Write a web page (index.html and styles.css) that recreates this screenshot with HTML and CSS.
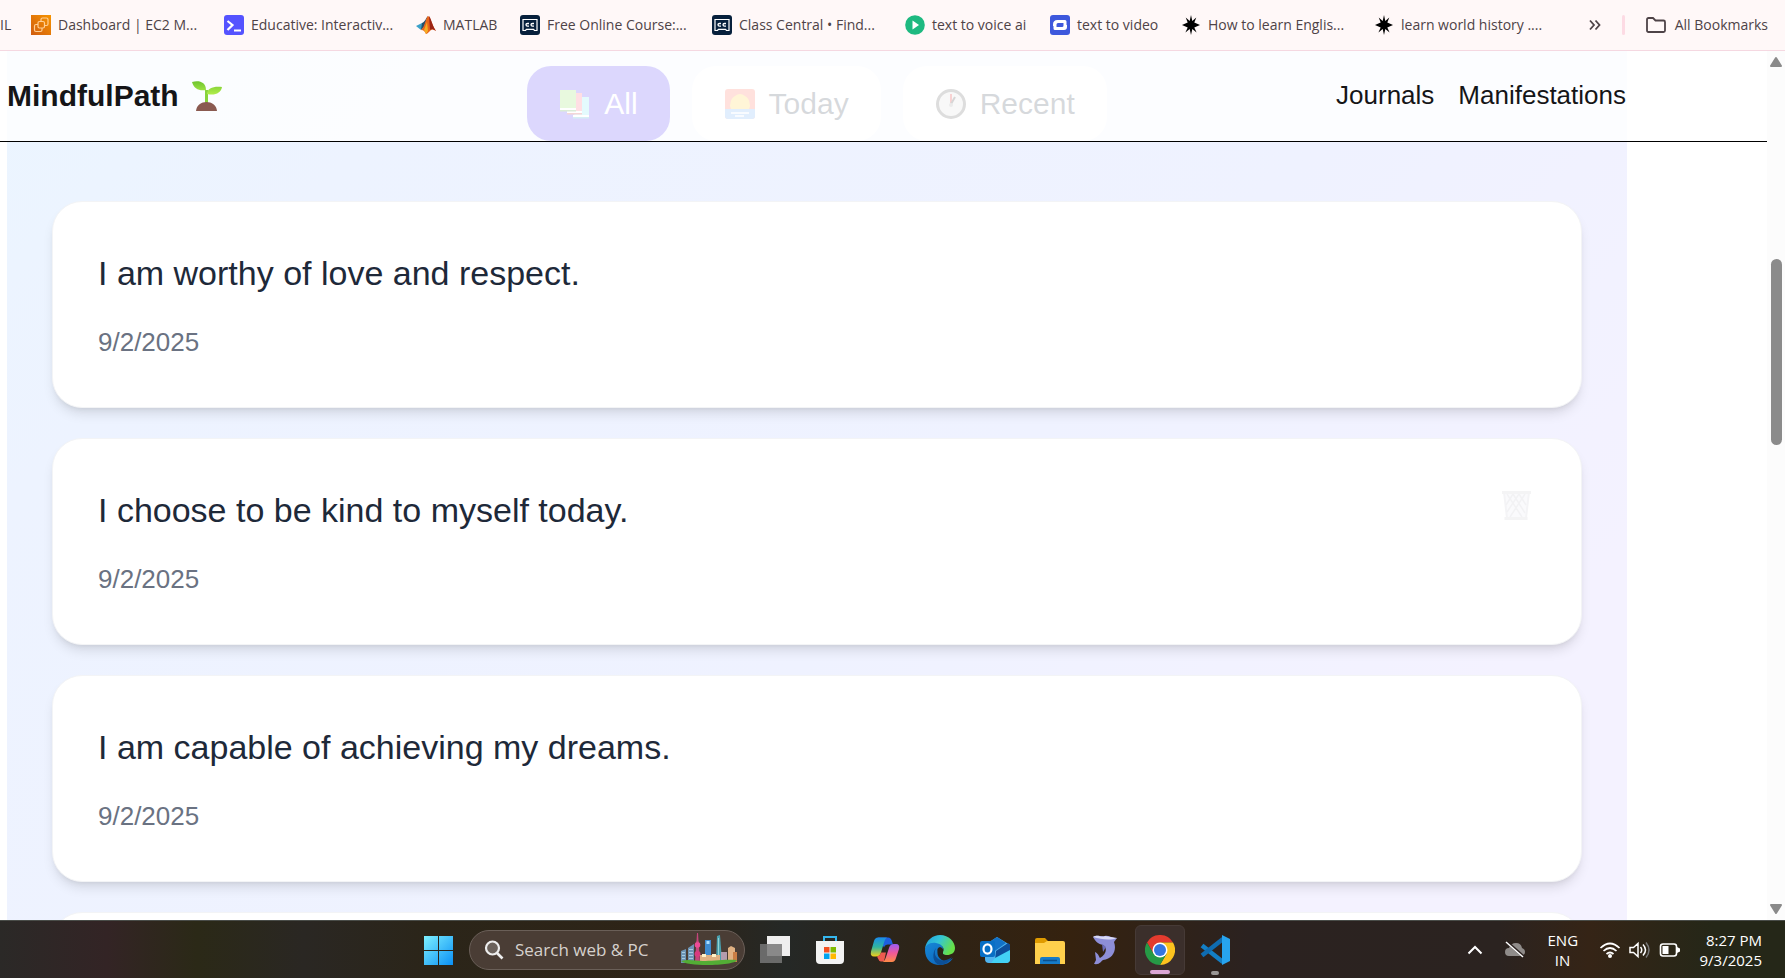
FILE: index.html
```html
<!DOCTYPE html>
<html lang="en">
<head>
<meta charset="utf-8">
<title>MindfulPath</title>
<link rel="stylesheet" href="styles.css">
</head>
<body>
<div class="screen">
  <nav class="bookmarks" aria-label="Bookmarks">
    <a class="bm" href="#">IL</a>
    <a class="bm" href="#"><svg class="ic20" viewBox="0 0 20 20"><defs><linearGradient id="aws" x1="0" y1="1" x2="1" y2="0"><stop offset="0" stop-color="#d05c10"/><stop offset="1" stop-color="#f79400"/></linearGradient></defs><path fill="url(#aws)" d="M0 0h20v20H0z"/><g fill="none" stroke="#ffcf95" stroke-width="1.200"><rect x="7" y="6.500" width="6.500" height="6.500" rx="1.500"/><path d="M10 6V4.500Q10 3 11.500 3H15.500Q17 3 17 4.500V9Q17 10.500 15.500 10.500H14M7 9.500H5Q3.500 9.500 3.500 11V15Q3.500 16.500 5 16.500H9.500Q11 16.500 11 15V13"/></g></svg>Dashboard | EC2 M...</a>
    <a class="bm" href="#"><svg class="ic20" viewBox="0 0 20 20"><rect width="20" height="20" rx="3" fill="#5553ff"/><path d="M3.500 6l5 4-5 5M10 15.500h7" fill="none" stroke="#fff" stroke-width="2.200"/></svg>Educative: Interactiv...</a>
    <a class="bm" href="#"><svg class="ic20" viewBox="0 0 20 20"><path fill="#3ba1c9" d="M0 11l6-3 3 3-4 4z"/><path fill="#26506a" d="M6 8c3-1 4-5 6-7L8 12l-3 3z"/><path fill="#e8641b" d="M12 1c2 0 4 9 8 15-3-2-4-2-6 0-2 2-3 3-4 3-1-2-2-4-5-4 4-3 5-13 7-14z"/><path fill="#9c2414" d="M13 1c2 2 3 9 7 15-3-2-5-2-6-1z"/><path fill="#f6ad24" d="M11 7l1 9-2 3-2-4z"/></svg>MATLAB</a>
    <a class="bm" href="#"><svg class="ic20" viewBox="0 0 20 20"><rect width="20" height="20" rx="3" fill="#07203c"/><path d="M3 4.500h14v11h-2.500l-1-1.200h-7l-1 1.200H3z" fill="none" stroke="#fff" stroke-width="1.200"/><path d="M9 8.500H7.500q-1.500 0-1.500 1.300t1.500 1.300H9M14 8.500h-1.500q-1.500 0-1.500 1.300t1.500 1.300H14" fill="none" stroke="#fff" stroke-width="1.300"/></svg>Free Online Course:...</a>
    <a class="bm" href="#"><svg class="ic20" viewBox="0 0 20 20"><rect width="20" height="20" rx="3" fill="#07203c"/><path d="M3 4.500h14v11h-2.500l-1-1.200h-7l-1 1.200H3z" fill="none" stroke="#fff" stroke-width="1.200"/><path d="M9 8.500H7.500q-1.500 0-1.500 1.300t1.500 1.300H9M14 8.500h-1.500q-1.500 0-1.500 1.300t1.500 1.300H14" fill="none" stroke="#fff" stroke-width="1.300"/></svg>Class Central • Find...</a>
    <a class="bm" href="#"><svg class="ic20" viewBox="0 0 20 20"><circle cx="10" cy="10" r="9.800" fill="#1eb980"/><path d="M7.500 5.500l6.500 4.500-6.500 4.500z" fill="#fff"/></svg>text to voice ai</a>
    <a class="bm" href="#"><svg class="ic20" viewBox="0 0 20 20"><rect width="20" height="20" rx="3" fill="#3e58dc"/><path fill="#fff" fill-rule="evenodd" d="M7.500 5H15q1.500 0 1.500 1.500V10h.5v2q0 3-3 3H5q-1.500 0-1.500-1.500V11H3V9.500Q3 5 7.500 5zM8 8q-1.500 0-1.500 1.500V12H12q1.500 0 1.500-1.500V8z"/></svg>text to video</a>
    <a class="bm" href="#"><svg class="ic20" viewBox="0 0 20 20"><path id="star" d="M10 0l1.300 6 4-3.600-2 5L19 10l-5.700 2.400 2.300 5-4.300-3.300L10 20l-1.300-5.900-4.300 3.300 2.300-5L1 10l5.700-2.600-2-5 4 3.600z"/></svg>How to learn Englis...</a>
    <a class="bm" href="#"><svg class="ic20" viewBox="0 0 20 20"><use href="#star"/></svg>learn world history ....</a>
    <div class="bm-end">
      <button class="plain" aria-label="More bookmarks"><svg width="14" height="20" viewBox="0 0 14 20"><path d="M2 5.500l4 4.500-4 4.500M7.500 5.500l4 4.500-4 4.500" fill="none" stroke="#4e4347" stroke-width="1.800"/></svg></button>
      <span class="bm-sep"></span>
      <a class="bm" href="#"><svg width="22" height="20" viewBox="0 0 22 20"><path d="M2 4.500q0-1.500 1.500-1.500H8l2.500 2.500h8Q20 5.500 20 7v8.500Q20 17 18.500 17h-15Q2 17 2 15.500z" fill="none" stroke="#4e4347" stroke-width="1.800"/></svg>All Bookmarks</a>
    </div>
  </nav>

  <div class="viewport">
    <div class="page">
      <header class="topnav">
        <div class="topnav-inner">
          <h1 class="brand">MindfulPath
            <svg width="30" height="30" viewBox="0 0 30 30"><defs><linearGradient id="leaf" x1="0" y1="0" x2="0" y2="1"><stop offset="0" stop-color="#6fc52e"/><stop offset="1" stop-color="#b2ee4c"/></linearGradient></defs><path fill="#87d33b" d="M13 9h3v13h-3z"/><path fill="url(#leaf)" d="M0 1c7-2 14 0 14 8C7 10 2 8 0 1zM30 6c-8-1-15 1-15 7 8 2 14-1 15-7z"/><path fill="#8a5a50" d="M4 30c1-12 20-12 21 0z"/></svg></h1>
          <nav class="links"><a href="#">Journals</a><a href="#">Manifestations</a></nav>
        </div>
      </header>
      <main class="content">
        <div class="filters">
          <button class="filter active"><svg width="32" height="32" viewBox="0 0 32 32"><path fill="#7be7f2" d="M18 9h12v19H15z"/><path fill="#fff" d="M14 27h16v3H14z"/><path fill="#33b1c9" d="M14 29h16v1.500H14z"/><path fill="#ff6078" d="M10 5h13v19H9z"/><path fill="#fff" d="M8 23h15v3H8z"/><path fill="#c33" d="M8 25h15v1.500H8z"/><path fill="#8ee05d" d="M1 2h16v18H1z"/><path fill="#fff" d="M1 20h16v3H1z"/><path fill="#4a9a3a" d="M1 22h16v1.500H1z"/></svg>All</button>
          <button class="filter"><svg width="32" height="32" viewBox="0 0 32 32"><rect x="1" y="1" width="30" height="30" rx="3" fill="#ff6a55"/><path fill="#ffcb3b" d="M7 21q-2-3-.5-6Q7 10 11 8q5-4 10 0 4 2 4.500 7 1.500 3-.5 6z"/><path fill="#69a9f5" d="M1 21h30v7q0 3-3 3H4q-3 0-3-3z"/><path d="M7 25h18M11 28h9" stroke="#fff" stroke-width="1.500"/></svg>Today</button>
          <button class="filter"><svg width="32" height="32" viewBox="0 0 32 32"><circle cx="16" cy="16" r="13.500" fill="#dcdcdc" stroke="#555" stroke-width="3"/><path d="M16 15V6" stroke="#d22" stroke-width="2"/><path d="M16 16l4-7" stroke="#333" stroke-width="2"/><circle cx="16" cy="17" r="2" fill="#999"/></svg>Recent</button>
        </div>
        <ul class="cards">
          <li class="card"><div><p class="quote">I am worthy of love and respect.</p><time>9/2/2025</time></div></li>
          <li class="card"><div><p class="quote">I choose to be kind to myself today.</p><time>9/2/2025</time></div>
            <button class="plain trash" aria-label="Delete"><svg width="30" height="32" viewBox="0 0 30 32"><path d="M3 3l3 26h19l3-26" fill="#fafafc" stroke="#f4f4f6" stroke-width="2"/><path d="M6 5l15 23M12 5l12 19M18 5l7 11M24 5L9 28M18 5L6 23M12 5L5 16" stroke="#f2f2f4" stroke-width="1.500"/><path d="M1 3.500h29M3.500 29.500h23" stroke="#f4f4f5" stroke-width="3"/></svg></button></li>
          <li class="card"><div><p class="quote">I am capable of achieving my dreams.</p><time>9/2/2025</time></div></li>
          <li class="card"></li>
        </ul>
      </main>
    </div>
    <div class="scrollbar">
      <svg width="14" height="12" viewBox="0 0 14 12"><path d="M7 2l5 8H2z" fill="#8a8a8a" stroke="#8a8a8a" stroke-width="2" stroke-linejoin="round"/></svg>
      <div class="track"><div class="thumb"></div></div>
      <svg width="14" height="12" viewBox="0 0 14 12"><path d="M7 10l5-8H2z" fill="#8a8a8a" stroke="#8a8a8a" stroke-width="2" stroke-linejoin="round"/></svg>
    </div>
  </div>

  <footer class="taskbar">
    <div class="apps">
      <button class="app" aria-label="Start"><svg width="30" height="30" viewBox="0 0 30 30"><defs><linearGradient id="win" x1="0" y1="0" x2="1" y2="1"><stop offset="0" stop-color="#7df0ff"/><stop offset="1" stop-color="#0a90f5"/></linearGradient></defs><path fill="url(#win)" d="M0 1h14v14H0zM15 1h14v14H15zM0 16h14v14H0zM15 16h14v14H15z"/></svg></button>
      <label class="search"><svg width="20" height="20" viewBox="0 0 20 20"><circle cx="8.500" cy="8" r="6.500" fill="#6b625c" stroke="#eee" stroke-width="2.200"/><path d="M13 13l5.500 5.500" stroke="#eee" stroke-width="2.600"/></svg>
        <input type="text" placeholder="Search web &amp; PC" aria-label="Search web &amp; PC">
        <svg width="56" height="34" viewBox="0 0 56 34"><path fill="#6c93b5" d="M0 18l5-2v14H0zM7 15l6-4v19H7z"/><path fill="#a8cbe0" d="M1 19h3v1H1zM1 22h3v1H1zM1 25h3v1H1zM8 16h4v1H8zM8 19h4v1H8zM8 22h4v1H8zM8 25h4v1H8z"/><path fill="#c4467c" d="M16 0h1l.5 8 1.500 3-1 3 1 15h-5l1-15-1-3 1.500-3z"/><circle cx="16.500" cy="12" r="2.800" fill="#ec4b96"/><circle cx="16.500" cy="21" r="3" fill="#d83b80"/><path fill="#3e8bd0" d="M24 7h6v21h-6z"/><path fill="#a8ddff" d="M25.500 8h3v3h-3z"/><path fill="#4a9fae" d="M36 3l3-1 2 26h-6z"/><path fill="#92d4d4" d="M37 5h1v22h-1z"/><path fill="#e0b183" d="M19 22h20v7H19zM47 15l3-2 4 2v14h-7z"/><path fill="#fff2c8" d="M21 21h4v3h-4zM31 21h4v3h-4z"/><path fill="#b59cae" d="M40 19h6v10h-6z"/><path fill="#c97d45" d="M52 19h4v10h-4z"/><path fill="#53ad35" d="M0 28c8-2 14 0 22 0s22-2 34-1c-2 6-50 7-56 1z"/></svg>
      </label>
      <button class="app" aria-label="Task view"><svg width="30" height="30" viewBox="0 0 30 30"><path fill="#eee" d="M7 1h23v20H7z"/><path fill="#777" fill-opacity=".85" d="M0 9h22v19H0z"/></svg></button>
      <button class="app" aria-label="Store"><svg width="30" height="30" viewBox="0 0 30 30"><path d="M9 7V2h12v5" fill="none" stroke="#35b7ee" stroke-width="2"/><path fill="#f3f3f3" d="M1 6h28v19q0 4-4 4H5q-4 0-4-4z"/><path fill="#f25022" d="M9 12h5.500v5.500H9z"/><path fill="#7fba00" d="M15.500 12H21v5.500h-5.500z"/><path fill="#00a4ef" d="M9 18.500h5.500V24H9z"/><path fill="#ffb900" d="M15.500 18.500H21V24h-5.500z"/></svg></button>
      <button class="app" aria-label="Copilot"><svg width="30" height="30" viewBox="0 0 30 30"><defs><linearGradient id="cp1" x1="0" y1="0" x2="0" y2="1"><stop offset="0" stop-color="#1a8ce8"/><stop offset=".5" stop-color="#30b5a0"/><stop offset="1" stop-color="#f2cf18"/></linearGradient><linearGradient id="cp2" x1="0" y1="0" x2="0" y2="1"><stop offset="0" stop-color="#9a5bf5"/><stop offset=".5" stop-color="#f0589a"/><stop offset="1" stop-color="#ff8b45"/></linearGradient></defs><path fill="#1d5fe0" d="M8 2.500h10q3 0 4 4l1 3h-5q-3 0-4 3z"/><path fill="url(#cp1)" d="M8 2.500h9q-2 1-3 5l-3 10q-1 4-5 4H4q-4 0-3-5L4 6q1-3.500 4-3.500z"/><path fill="#ee5a4e" d="M7 21.500q3-.5 4-4h5l-2 9h-3q-2 0-3-3z"/><path fill="url(#cp2)" d="M22 27h-9q2-1 3-5l3-9q1-4 5-4h2q4 0 3 5l-3 9q-1 4-4 4z"/></svg></button>
      <button class="app" aria-label="Edge"><svg width="30" height="30" viewBox="0 0 30 30"><defs><linearGradient id="e1" x1="0" y1="0" x2="1" y2=".4"><stop offset="0" stop-color="#1f9fe0"/><stop offset=".5" stop-color="#34c5d6"/><stop offset="1" stop-color="#66e04a"/></linearGradient><linearGradient id="e2" x1="0" y1="0" x2="1" y2="1"><stop offset="0" stop-color="#1688d8"/><stop offset="1" stop-color="#0b5fb4"/></linearGradient></defs><path fill="url(#e1)" d="M0 14C1 5 8 0 15 0c9 0 15 7 15 13 0 5-4 7-8 7-3 0-5-1-4-3 2-4-1-7-5-7C7 8 2 10 0 14z"/><path fill="url(#e2)" d="M0 15c0-5 5-8 11-7 5 1 8 4 7 7-7-4-8 8 1 11 4 0 7-1 9-3-3 5-8 7-13 7C6 30 0 24 0 15z"/><path fill="#0c4f96" d="M11 13c-4 8 3 14 10 12 3-1 5-2 6-3-3 6-9 8-12 8-8-2-8-12-4-17z"/><path fill="#2b2318" d="M15 12q-4 1-2 6 3 5 8 3-4-1-3-4 1-4-3-5z"/></svg></button>
      <button class="app" aria-label="Outlook"><svg width="30" height="30" viewBox="0 0 30 30"><path fill="#50b4ef" d="M5 10L17 2l13 8v14q0 4-4 4H9q-4 0-4-4z"/><path fill="#1272c8" d="M6 9L17 2l9 6-14 10-6-4z"/><path fill="#0d4e9b" d="M30 10v6l-15 9 1-9 12-8z"/><path fill="#43d1f5" d="M30 15v9q0 4-4 4H11l4-5z"/><rect y="6" width="15" height="16" rx="2" fill="#086fc5"/><ellipse cx="7.500" cy="14" rx="4" ry="4.700" fill="none" stroke="#fff" stroke-width="2.200"/></svg></button>
      <button class="app" aria-label="File Explorer"><svg width="30" height="30" viewBox="0 0 30 30"><path fill="#df9b00" d="M0 5q0-2 2-2h8l3 3h15v8H0z"/><path fill="#ffd04c" d="M0 8h9l3-2h16q2 0 2 2v21H0z"/><path fill="#167bc8" d="M5 29v-5q0-2 2-2h16q2 0 2 2v5z"/><path d="M8 25.500h14" stroke="#0b4f8d" stroke-width="1.500"/></svg></button>
      <button class="app" aria-label="Dolphin"><svg width="30" height="30" viewBox="0 0 30 30"><path fill="#8d8ed8" d="M3 2c5-3 8 0 12-1 3-1 9 3 12 2l-3 4c3 8-1 17-11 18-2 1-3 5-9 4l2-4-1-8c4 2 4 5 5 6 6-3 8-10 3-13-5-1-7-3-10-8z"/><path fill="#d8d9f6" d="M3 2c5-3 8 1 12-1l12 2c-8 3-16 1-24-1z"/><path fill="#6b6bb8" d="M12 9l1 8 3-5z"/></svg></button>
      <button class="app current" aria-label="Chrome"><svg width="30" height="30" viewBox="0 0 30 30"><path fill="#e33b2e" d="M2 7.500A15 15 0 0 1 28 7.500H15L8.500 18.700z"/><path fill="#fcc31e" d="M28 7.500A15 15 0 0 1 15 30l6.500-11.300L15 7.500z"/><path fill="#269a46" d="M2 7.500A15 15 0 0 0 15 30l6.500-11.300h-13z"/><circle cx="15" cy="15" r="7.500" fill="#fff"/><circle cx="15" cy="15" r="6" fill="#3475e0"/></svg></button>
      <button class="app running" aria-label="VS Code"><svg width="30" height="30" viewBox="0 0 30 30"><path d="M2 10.500L23 27" stroke="#137fc5" stroke-width="4.500"/><path d="M2 20.500L23 4" stroke="#0f6cb0" stroke-width="4.500"/><path fill="#27a4ef" d="M22 0l8 4v22l-8 4z"/></svg></button>
    </div>
    <div class="tray">
      <button class="plain" aria-label="Show hidden icons"><svg width="16" height="10" viewBox="0 0 16 10"><path d="M1.500 8.500L8 2l6.500 6.500" fill="none" stroke="#fff" stroke-width="2"/></svg></button>
      <svg class="cloud" width="22" height="18" viewBox="0 0 22 18"><path fill="#8f8b89" d="M5 15Q1 15 1 11T5 7Q7 2 12 2t6 5q3 1 3 4t-4 4z"/><path d="M3 1l17 15" stroke="#2b211f" stroke-width="3"/><path d="M2 1l17 15" stroke="#fff" stroke-width="1.500"/></svg>
      <div class="lang">ENG<br>IN</div>
      <div class="status">
        <svg width="22" height="18" viewBox="0 0 22 18"><path d="M1.500 7Q11-2 20.500 7M4.500 10Q11 4 17.500 10M7.500 13Q11 10 14.500 13" fill="none" stroke="#fff" stroke-width="1.700"/><circle cx="11" cy="15" r="2" fill="#fff"/></svg>
        <svg width="22" height="18" viewBox="0 0 22 18"><path d="M1 6.500h3.500L9 2.500v13l-4.500-4H1zM11.500 6q2.500 3 0 6M14 3.500q5 5.500 0 11" fill="none" stroke="#fff" stroke-width="1.500"/><path d="M17 1.500q6 7.500 0 15" fill="none" stroke="#777" stroke-width="1.500"/></svg>
        <svg width="22" height="18" viewBox="0 0 22 18"><rect x="1.500" y="3" width="16" height="12" rx="2.500" fill="none" stroke="#fff" stroke-width="1.600"/><path fill="#fff" d="M3.500 5h6v8h-6zM18 6l3 1.500v3L18 12z"/></svg>
      </div>
      <div class="clock">8:27 PM<br>9/3/2025</div>
    </div>
  </footer>
</div>
</body>
</html>
```
FILE: styles.css
```css
* { box-sizing: border-box; }
body { margin: 0; font-family: "Liberation Sans", Arial, sans-serif; background: #fff; }
a { color: inherit; text-decoration: none; }
button { font: inherit; border: 0; }
svg { display: block; flex: none; }
.plain { background: none; padding: 0; }
.screen { display: flex; flex-direction: column; height: 100vh; overflow: hidden; }

.bookmarks {
  display: grid;
  grid-template-columns: 31px 193px 192px 104px 192px 193px 145px 131px 193px 193px 1fr;
  align-items: center;
  height: 51px;
  flex: none;
  background: #fff8f8;
  border-bottom: 1px solid #f5d8e1;
  font-family: "Open Sans", "Noto Sans", sans-serif;
  font-size: 14px;
  line-height: 18px;
  color: #4e4347;
  white-space: nowrap;
}
.bm { display: flex; align-items: center; gap: 7px; }
.ic20 { width: 20px; height: 20px; }
.bm-end { display: flex; align-items: center; justify-content: flex-end; gap: 20px; padding-right: 17px; }
.bm-end .bm { gap: 8px; }
.bm-sep { width: 3px; height: 20px; border-radius: 2px; background: #fddbe4; }

.viewport { display: flex; flex: 1; min-height: 0; }
.page { position: relative; flex: 1; overflow: hidden; padding: 0 140px 0 7px; }
.topnav {
  position: absolute;
  top: 0;
  left: 0;
  right: 0;
  z-index: 1;
  height: 91px;
  background: rgba(255, 255, 255, .8);
  border-bottom: 1px solid #000;
}
.topnav-inner { display: flex; align-items: center; justify-content: space-between; height: 90px; padding: 0 141px 0 7px; color: #151517; }
.brand { display: flex; align-items: center; gap: 13px; margin: 0; font-size: 30px; line-height: 34px; }
.links { display: flex; gap: 24px; padding-bottom: 2px; font-size: 26px; line-height: 30px; }

.content { height: 1200px; padding: 15px 45px; background: linear-gradient(135deg, #ebf5ff, #edf3ff 16%, #eff2ff 50%, #f4f2ff 75%); }
.filters { display: flex; justify-content: center; gap: 22px; height: 75px; margin-bottom: 60px; }
.filter {
  display: flex;
  align-items: center;
  gap: 13px;
  padding: 0 32px;
  border-radius: 24px;
  background: #fff;
  color: #364153;
  font-size: 30px;
}
.filter.active { background: #4f39f6; color: #fff; }

.cards { display: flex; flex-direction: column; gap: 30px; margin: 0; padding: 0; list-style: none; }
.card {
  display: flex;
  justify-content: space-between;
  align-items: flex-start;
  height: 207px;
  padding: 45px;
  border-radius: 30px;
  border: 1px solid #f3f4f6;
  background: #fff;
  box-shadow: 0 8px 12px -2px rgba(0, 0, 0, .1), 0 4px 6px -4px rgba(0, 0, 0, .1);
}
.quote { margin: 0 0 28px; font-size: 34px; line-height: 52px; color: #1e2939; }
.card time { display: block; font-size: 26px; line-height: 30px; color: #6a7282; }
.trash { padding: 5px; }

.scrollbar { display: flex; flex-direction: column; align-items: center; width: 18px; padding: 5px 0; background: #fcfcfc; }
.track { flex: 1; width: 11px; padding-top: 191px; }
.thumb { height: 186px; border-radius: 6px; background: #8b8b8b; }

.taskbar {
  display: flex;
  justify-content: space-between;
  height: 58px;
  flex: none;
  border-top: 1px solid #494c48;
  background: linear-gradient(90deg, #2b2927, #332425 6%, #2b2917 11%, #2a2723 17%, #2b2519 24%, #2e2417 38%, #252826 44%, #2f2315 53%, #35220f 60%, #2b2220 70%, #2b2320 84%, #352416 89%, #252718 96%);
  color: #fff;
  font-family: "Open Sans", "Noto Sans", sans-serif;
}
.apps { display: flex; align-items: center; gap: 5px; padding-left: 414px; }
.app { position: relative; display: grid; place-items: center; width: 50px; height: 50px; padding: 0; border-radius: 6px; background: none; }
.current { background: #3b2f2b; border: 1px solid #463a36; }
.current::after, .running::after {
  content: "";
  position: absolute;
  bottom: 0;
  left: 50%;
  width: 20px;
  height: 4px;
  margin-left: -10px;
  border-radius: 2px;
  background: #dca6d5;
}
.running::after { width: 8px; margin-left: -4px; background: #9a9694; }
.search {
  display: flex;
  align-items: center;
  gap: 11px;
  width: 276px;
  height: 40px;
  padding: 0 7px 0 14px;
  border: 1px solid #6a5f58;
  border-radius: 20px;
  background: #4a3d35;
}
.search input { flex: 1; min-width: 0; padding: 0; border: 0; outline: 0; background: none; color: #fff; font: inherit; font-size: 17px; }
.search input::placeholder { color: #d6d1cd; opacity: 1; }
.tray { display: flex; align-items: center; padding-right: 23px; font-size: 15px; line-height: 20px; }
.cloud { margin: 0 22px 0 21px; }
.lang { width: 30px; margin-right: 21px; text-align: center; }
.status { display: flex; gap: 8px; margin-right: 19px; }
.clock { text-align: right; white-space: nowrap; }
```
